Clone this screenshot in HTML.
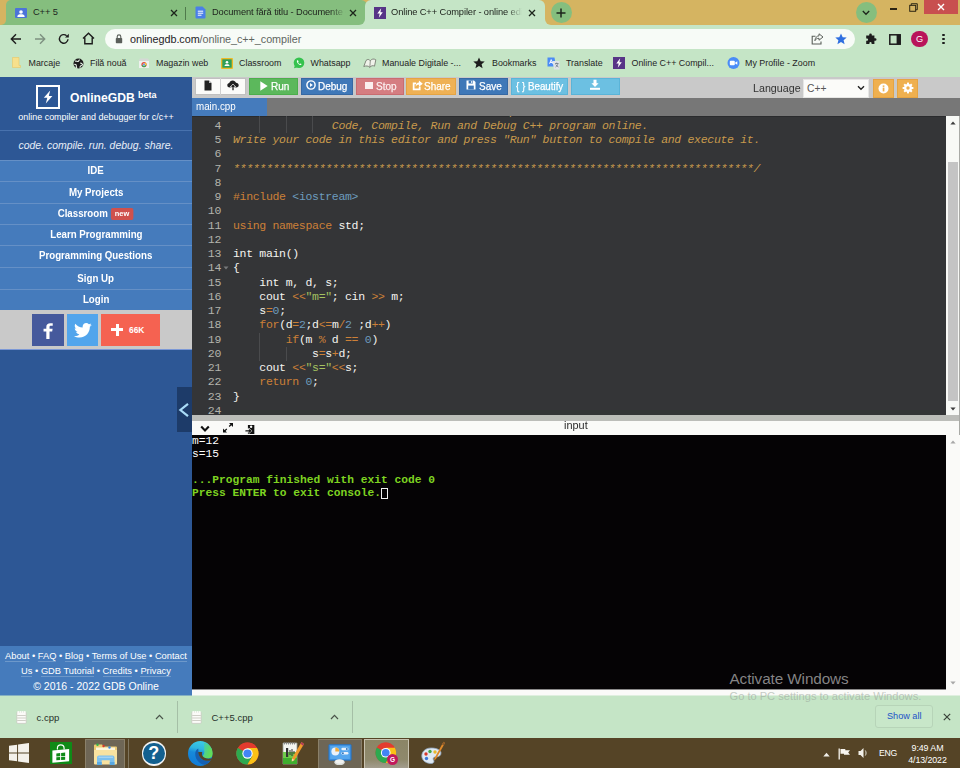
<!DOCTYPE html>
<html lang="en">
<head>
<meta charset="utf-8">
<title>Online C++ Compiler - online editor</title>
<style>
*{box-sizing:border-box;margin:0;padding:0}
html,body{width:960px;height:768px;overflow:hidden;background:#c5e5c6;font-family:"Liberation Sans",sans-serif;}
.abs{position:absolute}
#root{position:relative;width:960px;height:768px;overflow:hidden}
/* ===== browser chrome ===== */
#tabstrip{left:0;top:0;width:960px;height:26px;background:#d5b461}
#navbar{left:0;top:25px;width:960px;height:52px;background:#c5e5c6}
.tab{top:0;height:25px;font-size:9.5px;color:#1d2a1c;white-space:nowrap;overflow:hidden}
.tabtxt{position:absolute;top:7.300px;font-size:9.300px;letter-spacing:-0.100px;color:#20251f;white-space:nowrap}
.bm{top:57.500px;font-size:8.900px;color:#1f241f;white-space:nowrap}
/* ===== page ===== */
#sidebar{left:0;top:76px;width:192px;height:619px;background:#2d5795}
.menu{left:0;width:192px;height:21px;background:#457bbc;border-top:1px solid #6590c6;color:#fff;font-weight:bold;font-size:10.400px;text-align:center;line-height:20px}
#toolbar{left:192px;top:76px;width:768px;height:22px;background:#c9c9c9}
.btn{top:78px;height:17px;color:#fff;font-size:10.5px;line-height:16px;white-space:nowrap;border:1px solid rgba(0,0,0,.12)}
#filebar{left:192px;top:98px;width:768px;height:18px;background:#777}
#editor{left:192px;top:116px;width:754px;height:299px;background:#343537;overflow:hidden;font-family:"Liberation Mono",monospace;font-size:11.500px;letter-spacing:-0.3137px}
.ln{position:absolute;left:0;width:29px;text-align:right;color:#b4b4ac;height:14.25px;line-height:14.25px;white-space:pre}
.cl{position:absolute;left:41px;color:#f4f4f0;height:14.25px;line-height:14.25px;white-space:pre}
.k{color:#cc8038}.c{color:#c89a4c;font-style:italic}.s{color:#a5c261}.n{color:#6d9cbe}.o{color:#cc8038}.p{color:#c89a4c}
#console{left:192px;top:435px;width:754px;height:254px;background:#050305;font-family:"Liberation Mono",monospace;font-size:11.25px;color:#fff;overflow:hidden}
.co{position:absolute;left:0;white-space:pre;height:12.75px;line-height:12.75px}
.fl{border-bottom:1px solid rgba(255,255,255,.22)}
.mt{display:inline-block;transform:scaleX(.935);white-space:nowrap}
.bt{position:absolute;top:-1.100px;font-size:11.100px;white-space:nowrap;transform-origin:0 50%;transform:scaleX(.9);-webkit-text-stroke:0.250px currentColor}
</style>
</head>
<body>
<div id="root">

<!-- sidebar -->
<div id="sidebar" class="abs"></div>
<div class="abs" style="left:36px;top:85px;width:24px;height:24px;border:2px solid #fff;background:#2d5795"></div>
<svg class="abs" style="left:42px;top:90px" width="12" height="14" viewBox="0 0 12 14"><path d="M8.200 0.500 L1.800 7.700 H5.300 L3.800 13.500 L10.400 5.900 H6.800 Z" fill="#fff"/></svg>
<div class="abs" style="left:70px;top:90.500px;font-size:12.150px;font-weight:bold;color:#fff;white-space:nowrap">OnlineGDB</div>
<div class="abs" style="left:138px;top:89.500px;font-size:9px;font-weight:bold;color:#fff;white-space:nowrap">beta</div>
<div class="abs" style="left:0;top:112px;width:192px;text-align:center;font-size:8.970px;color:#fff;white-space:nowrap">online compiler and debugger for c/c++</div>
<div class="abs" style="left:0;top:130px;width:192px;height:1px;background:#4872ae"></div>
<div class="abs" style="left:0;top:139.500px;width:192px;text-align:center;font-size:10.450px;font-style:italic;color:#e8eef8;white-space:nowrap">code. compile. run. debug. share.</div>
<div class="abs menu" style="top:160px"><span class="mt">IDE</span></div>
<div class="abs menu" style="top:181px;height:22px;line-height:21.500px"><span class="mt">My Projects</span></div>
<div class="abs menu" style="top:203px;height:22px"><span class="mt">Classroom <span style="display:inline-block;background:#cf514d;color:#fff;font-size:8px;line-height:11px;height:12px;padding:0 4.500px;border-radius:2px;vertical-align:1px">new</span></span></div>
<div class="abs menu" style="top:224px;height:22px;line-height:20px"><span class="mt">Learn Programming</span></div>
<div class="abs menu" style="top:245px;height:22px;line-height:20px"><span class="mt">Programming Questions</span></div>
<div class="abs menu" style="top:267px;height:22px;line-height:21.500px"><span class="mt">Sign Up</span></div>
<div class="abs menu" style="top:289px;height:21px"><span class="mt">Login</span></div>
<div class="abs" style="left:0;top:310px;width:192px;height:39px;background:#c9c9c9"></div>
<div class="abs" style="left:0;top:349px;width:192px;height:1px;background:#7c98d6"></div>
<div class="abs" style="left:32px;top:314px;width:32px;height:32px;background:#45599c"></div>
<svg class="abs" style="left:39.500px;top:321.500px" width="15.500" height="18" viewBox="0 0 14 18" preserveAspectRatio="none"><path d="M8.6 17 V9.6 H11 L11.4 6.8 H8.6 V5.2 C8.6 4.3 8.9 3.8 10 3.8 H11.5 V1.3 C11.2 1.25 10.3 1.2 9.3 1.2 C7.1 1.2 5.7 2.5 5.7 4.9 V6.8 H3.2 V9.6 H5.7 V17 Z" fill="#fff"/></svg>
<div class="abs" style="left:67px;top:314px;width:31px;height:32px;background:#52a5ec"></div>
<svg class="abs" style="left:74px;top:323px" width="18" height="15" viewBox="0 0 24 20"><path d="M23.6 2.4c-.9.4-1.8.7-2.8.8 1-.6 1.800-1.600 2.100-2.700-.9.600-2 1-3.100 1.200C18.900.700 17.700.100 16.300.100c-2.700 0-4.800 2.200-4.800 4.800 0 .4 0 .8.100 1.100C7.600 5.800 4.100 3.900 1.700 1 1.300 1.700 1 2.600 1 3.500c0 1.700.900 3.200 2.200 4-.8 0-1.500-.2-2.200-.6v.100c0 2.300 1.700 4.300 3.900 4.700-.4.100-.8.200-1.300.2-.3 0-.6 0-.9-.1.600 1.900 2.400 3.300 4.500 3.400-1.700 1.300-3.700 2.100-6 2.100-.4 0-.8 0-1.200-.1 2.100 1.400 4.700 2.200 7.400 2.200 8.900 0 13.700-7.400 13.700-13.700v-.6c.9-.7 1.700-1.500 2.400-2.500z" fill="#fff"/></svg>
<div class="abs" style="left:101px;top:314px;width:59px;height:32px;background:#f56251"></div>
<div class="abs" style="left:111px;top:328px;width:12px;height:3px;background:#fff"></div>
<div class="abs" style="left:115.500px;top:323.500px;width:3px;height:12px;background:#fff"></div>
<div class="abs" style="left:129px;top:325px;font-size:8.400px;font-weight:bold;color:#fff">66K</div>
<div class="abs" style="left:177px;top:387px;width:15px;height:45px;background:#1d3b69"></div>
<svg class="abs" style="left:178px;top:401.500px" width="12" height="16" viewBox="0 0 12 16"><path d="M10 1.800 L2.400 8 L10 14.200" fill="none" stroke="#aadcf8" stroke-width="2.200"/></svg>
<div class="abs" style="left:0;top:646px;width:192px;height:50px;background:#457bbc"></div>
<div class="abs" style="left:0;top:651px;width:192px;text-align:center;font-size:9.300px;color:#fff;white-space:nowrap"><span class="fl">About</span> • <span class="fl">FAQ</span> • <span class="fl">Blog</span> • <span class="fl">Terms of Use</span> • <span class="fl">Contact</span></div>
<div class="abs" style="left:0;top:666px;width:192px;text-align:center;font-size:9.300px;color:#fff;white-space:nowrap"><span class="fl">Us</span> • <span class="fl">GDB Tutorial</span> • <span class="fl">Credits</span> • <span class="fl">Privacy</span></div>
<div class="abs" style="left:0;top:679.500px;width:192px;text-align:center;font-size:10.500px;color:#fff;white-space:nowrap">© 2016 - 2022 GDB Online</div>
<!-- toolbar -->
<div id="toolbar" class="abs"></div>
<div class="abs" style="left:195px;top:78px;width:51px;height:17px;background:#fbfbf9;border:1px solid #c0c0c0"></div>
<div class="abs" style="left:220px;top:78px;width:1px;height:17px;background:#d0d0d0"></div>
<svg class="abs" style="left:204px;top:80px" width="8" height="11" viewBox="0 0 8 11"><path d="M0.5 0.5 H5 L7.5 3 V10.5 H0.5 Z" fill="#222"/><path d="M5 0.5 V3 H7.5 Z" fill="#bbb"/></svg>
<svg class="abs" style="left:227px;top:80px" width="12" height="11" viewBox="0 0 12 11"><path d="M3 7.5 C1.3 7.5 0.3 6.500 0.3 5.200 C0.3 4 1.200 3.200 2.300 3.100 C2.600 1.500 4 0.400 5.700 0.400 C7.300 0.400 8.600 1.400 9 2.800 C10.600 2.900 11.700 3.900 11.700 5.300 C11.700 6.600 10.700 7.500 9.300 7.500 Z" fill="#222"/><path d="M6 4 L8.800 7 H7 V10.600 H5 V7 H3.200 Z" fill="#222" stroke="#fbfbf9" stroke-width="0.700"/></svg>
<div class="abs btn" style="left:249px;width:49px;background:#5cb85c;border-color:#4cae4c"><svg style="position:absolute;left:9.500px;top:1.700px" width="8" height="10" viewBox="0 0 8 10"><path d="M0.3 0.3 L7.700 5 L0.3 9.700 Z" fill="#fff"/></svg><span class="bt" style="left:21px">Run</span></div>
<div class="abs btn" style="left:301px;width:52px;background:#3f78b8;border-color:#3668a3"><svg style="position:absolute;left:4px;top:1.300px" width="10" height="10" viewBox="0 0 9 9"><circle cx="4.500" cy="4.500" r="3.700" fill="none" stroke="#fff" stroke-width="1.300"/><path d="M3.600 2.800 L6.200 4.500 L3.600 6.200 Z" fill="#fff"/></svg><span class="bt" style="left:16px">Debug</span></div>
<div class="abs btn" style="left:355.500px;width:48.700px;background:#d57d81;border-color:#c96c70"><div style="position:absolute;left:8.500px;top:2.500px;width:7.500px;height:7.500px;background:#fbeeee"></div><span class="bt" style="left:19px;color:#fbeeee">Stop</span></div>
<div class="abs btn" style="left:406px;width:50px;background:#efb155;border-color:#e5a443"><svg style="position:absolute;left:4.500px;top:0.800px" width="11" height="11" viewBox="0 0 10 10"><path d="M7 6 V8.500 H1.500 V3 H3.800" fill="none" stroke="#fff" stroke-width="1.600"/><path d="M6.300 0.500 L9.800 3.300 L6.300 6.100 V4.300 C4.800 4.300 3.900 4.800 3.300 6.200 C3.300 3.800 4.500 2.400 6.300 2.300 Z" fill="#fff"/></svg><span class="bt" style="left:17px">Share</span></div>
<div class="abs btn" style="left:459px;width:49px;background:#3f78b8;border-color:#3668a3"><svg style="position:absolute;left:6px;top:0.700px" width="10" height="10" viewBox="0 0 10 10"><path d="M0.500 0.500 H8 L9.500 2 V9.500 H0.500 Z" fill="#fff"/><rect x="2.600" y="0.500" width="4.300" height="3" fill="#3f78b8"/><rect x="5.200" y="1" width="1.100" height="2" fill="#fff"/><rect x="2.200" y="5.600" width="5.600" height="3.900" fill="#3f78b8"/></svg><span class="bt" style="left:18.500px">Save</span></div>
<div class="abs btn" style="left:511px;width:57.300px;background:#6cc0e2;border-color:#5ab4d8"><span class="bt" style="left:4px;transform:scaleX(.88)">{ } Beautify</span></div>
<div class="abs btn" style="left:571px;width:48.800px;background:#6cc0e2;border-color:#5ab4d8"><svg style="position:absolute;left:17px;top:0px" width="12" height="12" viewBox="0 0 12 12"><path d="M4.500 0.800 H7.500 V4.300 H9.600 L6 8 L2.400 4.300 H4.500 Z" fill="#fff"/><rect x="1" y="8.800" width="10" height="2" fill="#fff"/></svg></div>
<div class="abs" style="left:753px;top:81.500px;font-size:11.500px;color:#333;white-space:nowrap;transform-origin:0 0;transform:scaleX(.93)">Language</div>
<div class="abs" style="left:803px;top:79px;width:66px;height:18.500px;background:#fbfbf9;border:1px solid #e6e6e4"></div>
<div class="abs" style="left:807px;top:82.500px;font-size:10.300px;color:#555;white-space:nowrap">C++</div>
<svg class="abs" style="left:857px;top:85px" width="8" height="6" viewBox="0 0 8 6"><path d="M1 1.200 L4 4.200 L7 1.200" fill="none" stroke="#222" stroke-width="1.400"/></svg>
<div class="abs" style="left:873px;top:79px;width:21px;height:18.500px;background:#efb04f;border:1px solid #e5a443"></div>
<svg class="abs" style="left:878px;top:82.500px" width="11" height="11" viewBox="0 0 11 11"><circle cx="5.500" cy="5.500" r="5" fill="#fff"/><rect x="4.700" y="4.600" width="1.700" height="3.800" fill="#efb04f"/><rect x="4.700" y="2.400" width="1.700" height="1.500" fill="#efb04f"/></svg>
<div class="abs" style="left:897px;top:79px;width:21px;height:18.500px;background:#efb04f;border:1px solid #e5a443"></div>
<svg class="abs" style="left:901.500px;top:82.300px" width="12" height="12" viewBox="0 0 12 12"><g fill="#fff"><circle cx="6" cy="6" r="3.900"/><rect x="5" y="0.600" width="2" height="10.800"/><rect x="0.600" y="5" width="10.800" height="2"/><rect x="5" y="0.600" width="2" height="10.800" transform="rotate(45 6 6)"/><rect x="5" y="0.600" width="2" height="10.800" transform="rotate(-45 6 6)"/></g><circle cx="6" cy="6" r="1.700" fill="#efb04f"/></svg>
<!-- filebar -->
<div id="filebar" class="abs"></div>
<div class="abs" style="left:192px;top:98px;width:74.500px;height:18px;background:#457bbc"></div>
<div class="abs" style="left:196px;top:100.800px;font-size:10.300px;color:#fff;white-space:nowrap;transform-origin:0 0;transform:scaleX(.95)">main.cpp</div>
<div id="editor" class="abs">
<div class="abs" style="left:0;top:0;width:754px;height:1px;background:#2a2b2d"></div>
<div class="abs" style="left:67.35px;top:2.88px;width:1px;height:14.25px;background:#4a4b4d"></div>
<div class="abs" style="left:67.35px;top:-11.38px;width:1px;height:14.25px;background:#4a4b4d"></div>
<div class="abs" style="left:93.70px;top:2.88px;width:1px;height:14.25px;background:#4a4b4d"></div>
<div class="abs" style="left:93.70px;top:-11.38px;width:1px;height:14.25px;background:#4a4b4d"></div>
<div class="abs" style="left:120.05px;top:2.88px;width:1px;height:14.25px;background:#4a4b4d"></div>
<div class="abs" style="left:120.05px;top:-11.38px;width:1px;height:14.25px;background:#4a4b4d"></div>
<div class="abs" style="left:67.35px;top:216.62px;width:1px;height:14.25px;background:#4a4b4d"></div>
<div class="abs" style="left:67.35px;top:230.88px;width:1px;height:14.25px;background:#4a4b4d"></div>
<div class="abs" style="left:93.70px;top:230.88px;width:1px;height:14.25px;background:#4a4b4d"></div>
<div class="ln" style="top:-11.38px">3</div>
<div class="cl" style="top:-11.38px"><span class="c">                            Online C++ Compiler.</span></div>
<div class="ln" style="top:2.88px">4</div>
<div class="cl" style="top:2.88px"><span class="c">               Code, Compile, Run and Debug C++ program online.</span></div>
<div class="ln" style="top:17.12px">5</div>
<div class="cl" style="top:17.12px"><span class="c">Write your code in this editor and press "Run" button to compile and execute it.</span></div>
<div class="ln" style="top:31.38px">6</div>
<div class="ln" style="top:45.62px">7</div>
<div class="cl" style="top:45.62px"><span class="c">*******************************************************************************/</span></div>
<div class="ln" style="top:59.88px">8</div>
<div class="ln" style="top:74.12px">9</div>
<div class="cl" style="top:74.12px"><span class="k">#include </span><span class="n">&lt;iostream&gt;</span></div>
<div class="ln" style="top:88.38px">10</div>
<div class="ln" style="top:102.62px">11</div>
<div class="cl" style="top:102.62px"><span class="k">using namespace</span> std;</div>
<div class="ln" style="top:116.88px">12</div>
<div class="ln" style="top:131.12px">13</div>
<div class="cl" style="top:131.12px">int main()</div>
<div class="ln" style="top:145.38px">14</div>
<div class="cl" style="top:145.38px">{</div>
<div class="ln" style="top:159.62px">15</div>
<div class="cl" style="top:159.62px">    int m, d, s;</div>
<div class="ln" style="top:173.88px">16</div>
<div class="cl" style="top:173.88px">    cout <span class="o">&lt;&lt;</span><span class="s">"m="</span>; cin <span class="o">&gt;&gt;</span> m;</div>
<div class="ln" style="top:188.12px">17</div>
<div class="cl" style="top:188.12px">    s<span class="o">=</span><span class="n">0</span>;</div>
<div class="ln" style="top:202.38px">18</div>
<div class="cl" style="top:202.38px">    <span class="k">for</span>(d<span class="o">=</span><span class="n">2</span>;d<span class="o">&lt;=</span>m<span class="o">/</span><span class="n">2</span> ;d<span class="o">++</span>)</div>
<div class="ln" style="top:216.62px">19</div>
<div class="cl" style="top:216.62px">        <span class="k">if</span>(m <span class="o">%</span> d <span class="o">==</span> <span class="n">0</span>)</div>
<div class="ln" style="top:230.88px">20</div>
<div class="cl" style="top:230.88px">            s<span class="o">=</span>s<span class="o">+</span>d;</div>
<div class="ln" style="top:245.12px">21</div>
<div class="cl" style="top:245.12px">    cout <span class="o">&lt;&lt;</span><span class="s">"s="</span><span class="o">&lt;&lt;</span>s;</div>
<div class="ln" style="top:259.38px">22</div>
<div class="cl" style="top:259.38px">    <span class="k">return</span> <span class="n">0</span>;</div>
<div class="ln" style="top:273.62px">23</div>
<div class="cl" style="top:273.62px">}</div>
<div class="ln" style="top:287.88px">24</div>
<svg class="abs" style="left:31px;top:150.38px" width="6" height="4" viewBox="0 0 6 4"><path d="M0.500 0.500 H5.500 L3 3.500 Z" fill="#77787a"/></svg>
</div>
<div class="abs" style="left:946px;top:116px;width:14px;height:299px;background:#f8f9f6"></div>
<div class="abs" style="left:948px;top:162px;width:10px;height:238.500px;background:#c4c4c4"></div>
<svg class="abs" style="left:950px;top:121px" width="6" height="4" viewBox="0 0 8 5"><path d="M0.500 4.500 L4 0.500 L7.500 4.500 Z" fill="#3c3c3c"/></svg>
<svg class="abs" style="left:950px;top:407px" width="6" height="4" viewBox="0 0 8 5"><path d="M0.500 0.500 L4 4.500 L7.500 0.500 Z" fill="#3c3c3c"/></svg>
<!-- splitter + console -->
<div class="abs" style="left:192px;top:415px;width:768px;height:6px;background:#bcbdb9"></div>
<div class="abs" style="left:192px;top:421px;width:768px;height:14px;background:#fafaf8"></div>
<svg class="abs" style="left:199.500px;top:424.500px" width="10" height="8" viewBox="0 0 10 8"><path d="M1.200 1.500 L5 5.500 L8.800 1.500" fill="none" stroke="#111" stroke-width="2.100"/></svg>
<svg class="abs" style="left:221.500px;top:421.800px" width="12" height="12" viewBox="0 0 12 11"><path d="M7.200 4 L9.600 1.600 M2.400 8.800 L4.800 6.400" stroke="#111" stroke-width="1.300" fill="none"/><path d="M7 0.600 H11 V4.600 Z M1 6 V10 H5 Z" fill="#111"/></svg>
<svg class="abs" style="left:243.500px;top:423.500px" width="11.500" height="11" viewBox="0 0 12 12"><path d="M4 1 H11 V11 H4 V8 H6 V5 H4 Z" fill="#111"/><path d="M1 6.500 H5 V4.500 L8.500 7.500 L5 10.500 V8.500 H1 Z" fill="#111" stroke="#fafaf8" stroke-width="0.600"/><circle cx="7.500" cy="3" r="1.300" fill="#fafaf8"/></svg>
<div class="abs" style="left:563.500px;top:418.800px;font-size:10.600px;color:#2a2a2a;white-space:nowrap;transform-origin:0 0;transform:scaleX(1.03)">input</div>
<div id="console" class="abs">
<div class="co" style="top:0.300px">m=12</div>
<div class="co" style="top:13.050px">s=15</div>
<div class="co" style="top:39.050px;color:#7ed321;font-weight:bold">...Program finished with exit code 0</div>
<div class="co" style="top:51.800px;color:#7ed321;font-weight:bold">Press ENTER to exit console.</div>
<div class="abs" style="left:189px;top:52.500px;width:6.500px;height:11px;border:1px solid #f0f0f0"></div>
</div>
<div class="abs" style="left:946px;top:435px;width:14px;height:255px;background:#fafaf8"></div><div class="abs" style="left:192px;top:689px;width:754px;height:1px;background:#8a8989"></div>
<svg class="abs" style="left:950px;top:440px" width="6" height="4" viewBox="0 0 8 5"><path d="M0.500 4.500 L4 0.500 L7.500 4.500 Z" fill="#a8a8a8"/></svg>
<svg class="abs" style="left:950px;top:681px" width="6" height="4" viewBox="0 0 8 5"><path d="M0.500 0.500 L4 4.500 L7.500 0.500 Z" fill="#a8a8a8"/></svg>
<div class="abs" style="left:192px;top:690px;width:768px;height:6px;background:#fafaf8"></div>
<div class="abs" style="left:959px;top:116px;width:1px;height:319px;background:#a9aaa6"></div>
<!-- ===== browser chrome ===== -->
<div id="tabstrip" class="abs"></div>
<div id="navbar" class="abs"></div>
<!-- inactive tabs (green group) -->
<div class="abs" style="left:6px;top:0;width:361px;height:25px;background:#85be7e;border-radius:5px 6px 0 0"></div>
<div class="abs" style="left:0;top:20px;width:6px;height:5px;background:#85be7e"></div>
<div class="abs" style="left:-5px;top:13px;width:11px;height:12px;background:#d5b461;border-radius:0 0 5px 0"></div>
<!-- active tab -->
<div class="abs" style="left:365px;top:0;width:179.500px;height:26px;background:#c5e5c6;border-radius:6px 6px 0 0"></div>
<div class="abs" style="left:359px;top:19px;width:6px;height:6px;background:#c5e5c6"></div>
<div class="abs" style="left:353px;top:13px;width:12px;height:12px;background:#85be7e;border-radius:0 0 6px 0"></div>
<div class="abs" style="left:544.500px;top:19px;width:6px;height:6px;background:#c5e5c6"></div>
<div class="abs" style="left:544.500px;top:13px;width:12px;height:12px;background:#d5b461;border-radius:0 0 0 6px"></div>
<div class="abs" style="left:185px;top:7px;width:1px;height:13px;background:#4f7a4b"></div>
<!-- tab 1 -->
<div class="abs" style="left:15px;top:7.500px;width:12px;height:10.500px;background:#4c74d9;border-radius:1px"></div>
<svg class="abs" style="left:15px;top:7.500px" width="12" height="11" viewBox="0 0 12 11"><circle cx="6" cy="4" r="1.800" fill="#fff"/><path d="M2.300 9 C2.300 6.800 4 6.300 6 6.300 C8 6.300 9.700 6.800 9.700 9 Z" fill="#fff"/></svg>
<div class="tabtxt" style="left:33px">C++ 5</div>
<svg class="abs" style="left:170px;top:9px" width="8" height="8" viewBox="0 0 8 8"><path d="M1 1 L7 7 M7 1 L1 7" stroke="#1c241b" stroke-width="1.300"/></svg>
<!-- tab 2 -->
<svg class="abs" style="left:195px;top:6px" width="11" height="13" viewBox="0 0 11 13"><path d="M1.500 0.500 H7.500 L10.500 3.500 V11.500 Q10.500 12.500 9.500 12.500 H1.500 Q0.500 12.500 0.500 11.500 V1.500 Q0.500 0.500 1.500 0.500 Z" fill="#4a7fe8"/><path d="M2.800 5.200 H8.200 M2.800 7.200 H8.200 M2.800 9.200 H6.500" stroke="#fff" stroke-width="1"/></svg>
<div class="tabtxt" style="left:212px;width:136px;overflow:hidden;-webkit-mask-image:linear-gradient(90deg,#000 118px,transparent 134px);mask-image:linear-gradient(90deg,#000 118px,transparent 134px)">Document fără titlu - Documente Google</div>
<svg class="abs" style="left:349px;top:9px" width="8" height="8" viewBox="0 0 8 8"><path d="M1 1 L7 7 M7 1 L1 7" stroke="#1c241b" stroke-width="1.300"/></svg>
<!-- tab 3 -->
<div class="abs" style="left:373.500px;top:7px;width:12px;height:12px;background:#573487"></div>
<svg class="abs" style="left:375.500px;top:8px" width="8" height="10" viewBox="0 0 8 10"><path d="M5.200 0.300 L1.300 5.400 H3.700 L2.800 9.700 L6.800 4.300 H4.400 Z" fill="#fff"/></svg>
<div class="tabtxt" style="left:391px;width:132px;overflow:hidden;-webkit-mask-image:linear-gradient(90deg,#000 116px,transparent 131px);mask-image:linear-gradient(90deg,#000 116px,transparent 131px)">Online C++ Compiler - online editor</div>
<svg class="abs" style="left:528px;top:9px" width="8" height="8" viewBox="0 0 8 8"><path d="M1 1 L7 7 M7 1 L1 7" stroke="#1c241b" stroke-width="1.300"/></svg>
<!-- new tab -->
<div class="abs" style="left:550.500px;top:2px;width:21px;height:21px;border-radius:50%;background:#85be7e"></div>
<svg class="abs" style="left:556px;top:7.500px" width="10" height="10" viewBox="0 0 10 10"><path d="M5 0.500 V9.500 M0.500 5 H9.500" stroke="#1c241b" stroke-width="1.500"/></svg>
<!-- tab search -->
<div class="abs" style="left:855.500px;top:2px;width:21px;height:21px;border-radius:50%;background:#85be7e"></div>
<svg class="abs" style="left:862px;top:9.500px" width="8" height="6" viewBox="0 0 8 6"><path d="M0.800 1 L4 4.300 L7.200 1" fill="none" stroke="#1c241b" stroke-width="1.300"/></svg>
<!-- window controls -->
<div class="abs" style="left:890px;top:8px;width:7px;height:2px;background:#2b2412"></div>
<svg class="abs" style="left:909px;top:2.500px" width="9" height="9" viewBox="0 0 10 10"><path d="M2.500 2.500 V0.800 H9.200 V7.500 H7.500" fill="none" stroke="#2b2412" stroke-width="1.100"/><rect x="0.800" y="2.600" width="6.600" height="6.600" fill="none" stroke="#2b2412" stroke-width="1.100"/></svg>
<div class="abs" style="left:924px;top:0;width:34px;height:14px;background:#c84f4f"></div>
<svg class="abs" style="left:937px;top:3px" width="8" height="8" viewBox="0 0 8 8"><path d="M1 1 L7 7 M7 1 L1 7" stroke="#fff" stroke-width="1.400"/></svg>
<!-- nav buttons -->
<svg class="abs" style="left:10px;top:33px" width="12" height="12" viewBox="0 0 12 12"><path d="M11 6 H1.800 M6 1.300 L1.300 6 L6 10.700" fill="none" stroke="#1c1c1c" stroke-width="1.400"/></svg>
<svg class="abs" style="left:34px;top:33px" width="12" height="12" viewBox="0 0 12 12"><path d="M1 6 H10.200 M6 1.300 L10.700 6 L6 10.700" fill="none" stroke="#7d9080" stroke-width="1.400"/></svg>
<svg class="abs" style="left:58px;top:33px" width="12" height="12" viewBox="0 0 12 12"><path d="M10 6.300 A4.300 4.300 0 1 1 8.600 2.700" fill="none" stroke="#1c1c1c" stroke-width="1.400"/><path d="M10.800 0.800 V4.600 H7 Z" fill="#1c1c1c"/></svg>
<svg class="abs" style="left:82px;top:32px" width="13" height="13" viewBox="0 0 13 13"><path d="M1 6.500 L6.500 1.300 L12 6.500 M2.800 5.600 V11.800 H10.200 V5.600" fill="none" stroke="#1c1c1c" stroke-width="1.400"/></svg>
<!-- omnibox -->
<div class="abs" style="left:105px;top:28.500px;width:750px;height:20.500px;border-radius:10.250px;background:#f7fbf7"></div>
<svg class="abs" style="left:114.500px;top:34px" width="8" height="10" viewBox="0 0 8 10"><rect x="0.800" y="4" width="6.400" height="5.200" rx="0.700" fill="#5a5f5a"/><path d="M2.200 4 V2.700 A1.800 1.800 0 0 1 5.800 2.700 V4" fill="none" stroke="#5a5f5a" stroke-width="1.100"/></svg>
<div class="abs" style="left:130px;top:32.500px;font-size:10.800px;color:#1f231f;white-space:nowrap;letter-spacing:-0.050px">onlinegdb.com<span style="color:#5f665f">/online_c++_compiler</span></div>
<svg class="abs" style="left:811px;top:33px" width="13" height="12" viewBox="0 0 13 12"><path d="M4.500 3.200 H1.200 V11 H10 V8.500" fill="none" stroke="#5a5f5a" stroke-width="1.100"/><path d="M8 0.800 L12 4 L8 7.200 V5.300 C6 5.300 4.700 6 3.900 7.700 C4.100 4.700 5.700 3 8 2.800 Z" fill="none" stroke="#5a5f5a" stroke-width="1"/></svg>
<svg class="abs" style="left:835px;top:33px" width="12" height="12" viewBox="0 0 12 12"><path d="M6 0.500 L7.700 4.300 L11.700 4.600 L8.600 7.300 L9.600 11.300 L6 9.100 L2.400 11.300 L3.400 7.300 L0.300 4.600 L4.300 4.300 Z" fill="#2f6fe0"/></svg>
<!-- toolbar right icons -->
<svg class="abs" style="left:865px;top:33px" width="12" height="12" viewBox="0 0 12 12"><path d="M4.200 1.800 A1.300 1.300 0 0 1 6.800 1.800 V2.600 H9.400 V5.200 H10.200 A1.300 1.300 0 0 1 10.200 7.800 H9.400 V11 H6.600 V10.200 A1.100 1.100 0 0 0 4.400 10.200 V11 H1.200 V7.800 H2 A1.100 1.100 0 0 0 2 5.600 H1.200 V2.600 H4.200 Z" fill="#1c1c1c"/></svg>
<svg class="abs" style="left:889px;top:33.500px" width="12" height="11" viewBox="0 0 12 11"><rect x="0.800" y="0.800" width="10.400" height="9.400" fill="none" stroke="#1c1c1c" stroke-width="1.500"/><rect x="7.600" y="0.800" width="3.600" height="9.400" fill="#1c1c1c"/></svg>
<div class="abs" style="left:911.300px;top:30.700px;width:16.700px;height:16.700px;border-radius:50%;background:#b9145a;color:#fff;font-size:9.200px;text-align:center;line-height:16.700px">G</div>
<div class="abs" style="left:942.300px;top:33.800px;width:2.400px;height:2.400px;background:#1c1c1c;border-radius:50%;box-shadow:0 4px 0 #1c1c1c,0 8px 0 #1c1c1c"></div>
<!-- bookmarks bar -->
<svg class="abs" style="left:12px;top:57px" width="9" height="11" viewBox="0 0 9 11"><path d="M0.500 0.500 H7 V8.500 H8.500 V10.500 H0.500 Z" fill="#f7e08c" stroke="#e9c764" stroke-width="0.600"/></svg>
<div class="abs bm" style="left:28.500px">Marcaje</div>
<svg class="abs" style="left:72.500px;top:57.500px" width="11" height="11" viewBox="0 0 11 11"><circle cx="5.500" cy="5.500" r="5" fill="#1d1d1d"/><path d="M2 3.300 C3.300 2.600 4.200 3.800 5.200 3.400 C6.200 3 5.600 1.900 6.800 1.700 M1.300 6.500 C2.600 6 3.500 7 3.300 8.200 C3.200 9 3.800 9.300 3.700 10 M7.200 5.200 C8.300 5 9.200 5.800 9.700 6.700 C9 7.700 8.300 7.200 7.600 7.800 C7 8.300 7.400 9 6.700 9.600" fill="none" stroke="#e9f3e9" stroke-width="1.100"/></svg>
<div class="abs bm" style="left:90px">Filă nouă</div>
<svg class="abs" style="left:138px;top:57px" width="12" height="12" viewBox="0 0 12 12"><path d="M0.500 4 L2 1.500 H10 L11.500 4 Z" fill="#d5d9d5"/><path d="M1 4 H11 V11 H1 Z" fill="#eef1ee"/><circle cx="6" cy="7.600" r="2.600" fill="#e24a3b"/><path d="M3.600 8.600 A2.600 2.600 0 0 0 8.400 8.600 L6 7.600 Z" fill="#3aa757"/><path d="M6 7.600 L8.400 8.600 A2.600 2.600 0 0 0 7.300 5.400 Z" fill="#f7c52d"/><circle cx="6" cy="7.600" r="1.100" fill="#4a86e8" stroke="#fff" stroke-width="0.400"/></svg>
<div class="abs bm" style="left:156px">Magazin web</div>
<svg class="abs" style="left:221px;top:57.500px" width="12" height="11" viewBox="0 0 12 11"><rect x="0" y="0" width="12" height="11" rx="1" fill="#eeb927"/><rect x="1.300" y="1.300" width="9.400" height="8.400" fill="#2f9e5a"/><circle cx="6" cy="4.300" r="1.300" fill="#fff"/><path d="M3.500 8 C3.500 6.600 4.700 6.200 6 6.200 C7.300 6.200 8.500 6.600 8.500 8 Z" fill="#fff"/></svg>
<div class="abs bm" style="left:239px">Classroom</div>
<svg class="abs" style="left:292.500px;top:57px" width="12" height="12" viewBox="0 0 12 12"><circle cx="6" cy="5.800" r="5.300" fill="#35c24e"/><path d="M1 11.300 L1.900 8.300 L4 10.400 Z" fill="#35c24e"/><path d="M4.300 3.300 C3.600 3.700 3.700 4.900 4.700 6.200 C5.700 7.500 7 8.300 7.900 8 C8.400 7.800 8.600 7.300 8.500 7 L7.300 6.400 L6.800 7 C6.200 6.800 5.400 6 5.100 5.400 L5.600 4.800 L5.100 3.500 C4.900 3.200 4.500 3.200 4.300 3.300 Z" fill="#fff"/></svg>
<div class="abs bm" style="left:310.500px">Whatsapp</div>
<svg class="abs" style="left:363px;top:57px" width="14" height="12" viewBox="0 0 14 12"><path d="M0.800 9.500 L3 3.500 C4.500 2 6.200 2.200 7.300 3.800 C8.800 1.800 10.800 1.500 12.800 2.800 L11.500 9.200 C10 8.200 8.300 8.600 6.800 10.300 C5.300 8.800 3 8.600 0.800 9.500 Z" fill="#f0f2ea" stroke="#6a6f64" stroke-width="0.800"/><path d="M7.300 3.800 L6.800 10.300" stroke="#6a6f64" stroke-width="0.700"/></svg>
<div class="abs bm" style="left:382px">Manuale Digitale -...</div>
<svg class="abs" style="left:473px;top:57px" width="12" height="12" viewBox="0 0 12 12"><path d="M6 0.500 L7.700 4.300 L11.700 4.600 L8.600 7.300 L9.600 11.300 L6 9.100 L2.400 11.300 L3.400 7.300 L0.300 4.600 L4.300 4.300 Z" fill="#1d1d1d"/></svg>
<div class="abs bm" style="left:492px">Bookmarks</div>
<svg class="abs" style="left:547px;top:56.500px" width="13" height="13" viewBox="0 0 13 13"><path d="M0.500 0.500 H7.500 L9 9.500 H0.500 Z" fill="#4b8bf5"/><path d="M5.500 4 H12.500 V12.500 H7 Z" fill="#dfe3e8"/><path d="M2.500 6.800 L4.200 2.600 L5.900 6.800 M3.100 5.500 H5.300" fill="none" stroke="#fff" stroke-width="0.900"/><path d="M8 6.500 H11.500 M9.700 5.600 V6.500 M8.600 10 C10 9.300 10.700 8 10.900 6.600 M8.700 7.500 C9.300 8.600 10.300 9.500 11.500 10" fill="none" stroke="#5f6b7a" stroke-width="0.700"/></svg>
<div class="abs bm" style="left:566px">Translate</div>
<div class="abs" style="left:613px;top:57px;width:12px;height:12px;background:#573487"></div>
<svg class="abs" style="left:615px;top:58px" width="8" height="10" viewBox="0 0 8 10"><path d="M5.200 0.300 L1.300 5.400 H3.700 L2.800 9.700 L6.800 4.300 H4.400 Z" fill="#fff"/></svg>
<div class="abs bm" style="left:631.500px">Online C++ Compil...</div>
<svg class="abs" style="left:727px;top:57px" width="13" height="12" viewBox="0 0 13 12"><circle cx="6.500" cy="6" r="6" fill="#4a8cf7"/><rect x="2.800" y="3.800" width="5" height="4.400" rx="1" fill="#fff"/><path d="M8.200 5.600 L10.300 4.200 V7.800 L8.200 6.400 Z" fill="#fff"/></svg>
<div class="abs bm" style="left:745px">My Profile - Zoom</div>

<!-- ===== download shelf ===== -->
<div class="abs" style="left:0;top:696px;width:960px;height:42px;background:#c5e5c6"></div>
<svg class="abs" style="left:15.500px;top:709.500px" width="11" height="14" viewBox="0 0 11 14"><path d="M0.800 2.500 H10.200 V12.600 Q10.200 13.400 9.400 13.400 H1.600 Q0.800 13.400 0.800 12.600 Z" fill="#fbfbf8" stroke="#c4c4bb" stroke-width="0.700"/><circle cx="2.300" cy="2.200" r="1.100" fill="#fbfbf8"/><circle cx="4.450" cy="2.200" r="1.100" fill="#fbfbf8"/><circle cx="6.600" cy="2.200" r="1.100" fill="#fbfbf8"/><circle cx="8.750" cy="2.200" r="1.100" fill="#fbfbf8"/><path d="M1.200 5.500 H9.800 M1.200 8 H9.800 M1.200 10.500 H9.800" stroke="#c9c9c1" stroke-width="0.900"/></svg>
<div class="abs" style="left:36.500px;top:711.500px;font-size:9.500px;color:#25302a;white-space:nowrap">c.cpp</div>
<svg class="abs" style="left:155px;top:714px" width="9" height="6" viewBox="0 0 9 6"><path d="M1 5 L4.500 1.300 L8 5" fill="none" stroke="#4a544a" stroke-width="1.200"/></svg>
<div class="abs" style="left:177px;top:701px;width:1px;height:32px;background:#a5bfa6"></div>
<svg class="abs" style="left:190.500px;top:709.500px" width="11" height="14" viewBox="0 0 11 14"><path d="M0.800 2.500 H10.200 V12.600 Q10.200 13.400 9.400 13.400 H1.600 Q0.800 13.400 0.800 12.600 Z" fill="#fbfbf8" stroke="#c4c4bb" stroke-width="0.700"/><circle cx="2.300" cy="2.200" r="1.100" fill="#fbfbf8"/><circle cx="4.450" cy="2.200" r="1.100" fill="#fbfbf8"/><circle cx="6.600" cy="2.200" r="1.100" fill="#fbfbf8"/><circle cx="8.750" cy="2.200" r="1.100" fill="#fbfbf8"/><path d="M1.200 5.500 H9.800 M1.200 8 H9.800 M1.200 10.500 H9.800" stroke="#c9c9c1" stroke-width="0.900"/></svg>
<div class="abs" style="left:211.500px;top:711.500px;font-size:9.500px;color:#25302a;white-space:nowrap">C++5.cpp</div>
<svg class="abs" style="left:330px;top:714px" width="9" height="6" viewBox="0 0 9 6"><path d="M1 5 L4.500 1.300 L8 5" fill="none" stroke="#4a544a" stroke-width="1.200"/></svg>
<div class="abs" style="left:352px;top:701px;width:1px;height:32px;background:#a5bfa6"></div>
<div class="abs" style="left:875px;top:705px;width:58px;height:22.500px;border:1px solid #b7d4b8;border-radius:3px;background:#c8e7c9"></div>
<div class="abs" style="left:887px;top:711px;font-size:9.150px;color:#1d53c8;white-space:nowrap">Show all</div>
<svg class="abs" style="left:942.500px;top:712.500px" width="8" height="8" viewBox="0 0 8 8"><path d="M0.800 0.800 L7.200 7.200 M7.200 0.800 L0.800 7.200" stroke="#3a443a" stroke-width="1.200"/></svg>
<div class="abs" style="left:0;top:695px;width:192px;height:1px;background:#85b0c1"></div><div class="abs" style="left:192px;top:695px;width:768px;height:1px;background:#dfefdf"></div>
<!-- watermark -->
<div class="abs" style="left:729.500px;top:669.500px;font-size:15.300px;color:rgba(185,185,185,.72);white-space:nowrap;letter-spacing:-0.100px">Activate Windows</div>
<div class="abs" style="left:729.500px;top:689.500px;font-size:11.100px;color:rgba(150,160,150,.55);white-space:nowrap;letter-spacing:0">Go to PC settings to activate Windows.</div>
<!-- ===== taskbar ===== -->
<div class="abs" style="left:0;top:738px;width:960px;height:30px;background:#554426"></div>
<!-- start -->
<svg class="abs" style="left:9px;top:742.500px" width="20" height="20" viewBox="0 0 21 21"><path d="M0 3 L8.500 1.800 V10 H0 Z M9.500 1.650 L21 0 V10 H9.500 Z M0 11 H8.500 V19.200 L0 18 Z M9.500 11 H21 V21 L9.500 19.350 Z" fill="#f4f1ea"/></svg>
<!-- store -->
<div class="abs" style="left:49.500px;top:742px;width:22.500px;height:22px;background:#0f8a17"></div>
<svg class="abs" style="left:50px;top:742.500px" width="21.500" height="21.500" viewBox="0 0 18 18"><path d="M6.200 5.500 V4.300 A2.800 2.800 0 0 1 11.800 4.300 V5.500" fill="none" stroke="#fff" stroke-width="1"/><path d="M2 6.300 L16 5 V15.200 L2 16.500 Z" fill="#fff"/><path d="M5.300 8.700 L8.500 8.400 V11 L5.300 11.200 Z M9.300 8.300 L12.700 8 V10.800 L9.300 11 Z M5.300 11.900 L8.500 11.700 V14.300 L5.300 14.500 Z M9.300 11.700 L12.700 11.500 V14.100 L9.300 14.300 Z" fill="#0f8a17"/></svg>
<!-- explorer (highlighted) -->
<div class="abs" style="left:85px;top:739px;width:40px;height:29px;background:#6e6656;border:1px solid #8a806a;border-bottom:none"></div>
<div class="abs" style="left:127.500px;top:739px;width:1.500px;height:29px;background:#7f755f"></div>
<svg class="abs" style="left:93px;top:742px" width="25" height="24" viewBox="0 0 25 24"><path d="M1 3.500 Q1 2.500 2 2.500 H9 L11 4.500 H23 Q24 4.500 24 5.500 V20 H1 Z" fill="#eccb72"/><path d="M3 5.500 H22 V19 H3 Z" fill="#fdf6dc"/><path d="M1 8 H24 V21.500 Q24 22.500 23 22.500 H2 Q1 22.500 1 21.500 Z" fill="#f8e2a0"/><circle cx="4.500" cy="2.800" r="1.200" fill="#2fb34a"/><circle cx="10.500" cy="4" r="1.200" fill="#d8392b"/><circle cx="16.500" cy="5.500" r="1.200" fill="#3b8be8"/><path d="M4 15.500 Q4 13.500 6 13.500 H19.500 Q21.500 13.500 21.500 15.500 V23 H16.800 V18.300 H8.700 V23 H4 Z" fill="#7cc0ee"/><path d="M5.500 15.500 H20 V14.800 H5.500 Z" fill="#c9e6fa"/><path d="M4 20 H8.700 V23 H4 Z M16.800 20 H21.500 V23 H16.800 Z" fill="#5aa9e2"/></svg>
<!-- help -->
<div class="abs" style="left:141.500px;top:741px;width:24.500px;height:24.500px;border-radius:50%;background:#f3f3f3"></div>
<div class="abs" style="left:143px;top:742.500px;width:21.500px;height:21.500px;border-radius:50%;background:#13608f"></div>
<div class="abs" style="left:143px;top:743px;width:21.500px;text-align:center;font-size:18px;font-weight:bold;color:#fff;line-height:21px">?</div>
<!-- edge -->
<svg class="abs" style="left:188px;top:741px" width="24.600" height="25" viewBox="0 0 24 24" preserveAspectRatio="none"><defs><linearGradient id="eg1" x1="0.500" y1="0" x2="0.300" y2="1"><stop offset="0" stop-color="#3ccbe6"/><stop offset="0.300" stop-color="#2fb6e0"/><stop offset="0.480" stop-color="#178ada"/><stop offset="1" stop-color="#0f7ad6"/></linearGradient><linearGradient id="eg2" x1="0" y1="0.200" x2="1" y2="0.700"><stop offset="0" stop-color="#3fc9c0"/><stop offset="0.600" stop-color="#5ad96a"/><stop offset="1" stop-color="#66e052"/></linearGradient><clipPath id="ecl"><circle cx="12" cy="12" r="12"/></clipPath></defs><g clip-path="url(#ecl)"><rect width="24" height="24" fill="url(#eg1)"/><path d="M15.500 1.500 C20.500 2.500 24.500 7 24.500 12 C24.500 15.200 21.500 17 18.500 16.800 C16 16.600 14 15.400 14.200 14.200 C15.600 13 16.200 11 15.800 9 C15.600 6.500 15.900 4 15.500 1.500 Z" fill="url(#eg2)"/><path d="M10 7.300 C6.800 8.800 6.300 13 8 16.800 C10 21.200 15 23.800 19.200 22.200 C21.200 21.300 22.500 20 23 18.400 C19 19.600 14 19 12 16 C10.500 14 10 11.500 10.200 10.500 Z" fill="#1560b2"/><path d="M10 10.500 H13.900 C13.500 12 13.600 13.500 14.200 14.500 C15.500 16.500 18.500 17.100 21.500 16.900 L23.800 17.600 L23 18.600 C19 19.500 14.500 18.900 12.300 16.200 C10.800 14.500 10 12.500 10 10.500 Z" fill="#554426"/><path d="M24.500 15.500 C23.500 16.500 22.500 16.900 21.500 16.900 L23.800 17.600 L23 18.400 C22.500 20 21.200 21.300 19.200 22.200 C18 22.700 17 22.900 16 22.900 L16 24.500 H24.500 Z" fill="#554426"/></g></svg>
<!-- chrome -->
<svg class="abs" style="left:235.500px;top:741.500px" width="23" height="23" viewBox="0 0 24 24"><circle cx="12" cy="12" r="11.500" fill="#e33b2e"/><path d="M12 12 L2.040 17.750 A11.500 11.500 0 0 1 2.040 6.250 Z" fill="#e33b2e"/><path d="M2.040 6.250 L7 14.900 L12 23.500 A11.500 11.500 0 0 1 2.040 6.250 Z" fill="#2da94f"/><path d="M2.040 6.250 A11.500 11.500 0 0 0 12 23.500 L17 14.900 L12 12 Z" fill="#2da94f"/><path d="M12 23.500 A11.500 11.500 0 0 0 21.960 6.250 H12 L17 14.900 Z" fill="#fbc116"/><path d="M2.040 6.250 A11.500 11.500 0 0 1 21.960 6.250 H12 Z" fill="#e33b2e"/><path d="M12 6.250 H21.960 L17 14.900 Z" fill="#fbc116"/><circle cx="12" cy="12" r="5.400" fill="#fff"/><circle cx="12" cy="12" r="4.300" fill="#4285f4"/></svg>
<!-- notepad -->
<svg class="abs" style="left:282px;top:741px" width="23" height="24" viewBox="0 0 23 24"><path d="M1 2 H15 V23 H1 Z" fill="#f4f6f1" stroke="#9aa094" stroke-width="0.800"/><path d="M1 11 H15 V23 H1 Z" fill="#6fc94a"/><path d="M1 17 H15 V23 H1 Z" fill="#3fae2f"/><path d="M2.500 1 V3.500 M4.500 1 V3.500 M6.500 1 V3.500 M8.500 1 V3.500 M10.500 1 V3.500 M12.500 1 V3.500" stroke="#777" stroke-width="0.800"/><rect x="4" y="7" width="2.200" height="9" fill="#333"/><path d="M8 9 V14 M10 8 V15 M12 10 V13" stroke="#333" stroke-width="1"/><path d="M19.500 1 L22 3 L12.500 19 L9.800 20.500 L10 17.500 Z" fill="#f09a2b"/><path d="M19.500 1 L22 3 L21 4.700 L18.500 2.700 Z" fill="#b23a5a"/><path d="M9.800 20.500 L10 17.500 L12.500 19 Z" fill="#f1d9b0"/></svg>
<!-- control panel (highlighted) -->
<div class="abs" style="left:318px;top:739px;width:44px;height:29px;background:#6e6656;border:1px solid #8a806a;border-bottom:none"></div>
<svg class="abs" style="left:327.500px;top:743.500px" width="24" height="21.500" viewBox="0 0 25 23"><rect x="0.500" y="0.500" width="24" height="17" rx="1" fill="#3a8ee0" stroke="#2a6fb8" stroke-width="0.800"/><rect x="2" y="2" width="21" height="14" fill="#55a6ee"/><circle cx="7.500" cy="8" r="4.200" fill="#e9f1fa"/><path d="M7.500 8 V3.800 A4.200 4.200 0 0 1 11.700 8 Z" fill="#f0a93a"/><rect x="14" y="4" width="7.500" height="2.600" rx="1.300" fill="#e9f1fa"/><rect x="14" y="8.500" width="7.500" height="2.600" rx="1.300" fill="#e9f1fa"/><circle cx="19.800" cy="5.300" r="1" fill="#2a6fb8"/><circle cx="15.600" cy="9.800" r="1" fill="#2a6fb8"/><ellipse cx="12" cy="19.500" rx="5.500" ry="3.300" fill="#d9dcd8"/><ellipse cx="12" cy="18.800" rx="4.500" ry="2.300" fill="#f1f2f0"/></svg>
<!-- chrome active -->
<div class="abs" style="left:364px;top:739px;width:44.500px;height:29px;background:linear-gradient(#8b8566 0%,#8f896c 70%,#a39d8e 100%);border:1px solid #c9c3b0;border-bottom:none"></div>
<svg class="abs" style="left:375px;top:742.300px" width="21.500" height="21.500" viewBox="0 0 24 24"><circle cx="12" cy="12" r="11.500" fill="#e33b2e"/><path d="M2.040 6.250 A11.500 11.500 0 0 0 12 23.500 L17 14.900 L12 12 Z" fill="#2da94f"/><path d="M12 23.500 A11.500 11.500 0 0 0 21.960 6.250 H12 L17 14.900 Z" fill="#fbc116"/><path d="M2.040 6.250 A11.500 11.500 0 0 1 21.960 6.250 H12 Z" fill="#e33b2e"/><circle cx="12" cy="12" r="5.400" fill="#fff"/><circle cx="12" cy="12" r="4.300" fill="#4285f4"/></svg>
<div class="abs" style="left:387px;top:753.500px;width:11px;height:11px;border-radius:50%;background:#c2185b;color:#fff;font-size:6.500px;font-weight:bold;text-align:center;line-height:11px">G</div>
<!-- paint -->
<svg class="abs" style="left:421px;top:741px" width="25" height="24" viewBox="0 0 25 24"><path d="M10 7 C4 7 0.800 11 0.800 15 C0.800 19.500 5 22.500 10 22.500 C13 22.500 13.500 20.500 12.500 19 C11.500 17.500 12.500 16 14.500 16 C18 16 20 14.500 20 12 C20 9 16 7 10 7 Z" fill="#dfe9f3" stroke="#8ea3bb" stroke-width="0.800"/><circle cx="5" cy="13" r="1.700" fill="#d6382c"/><circle cx="9" cy="10.500" r="1.700" fill="#3fa64b"/><circle cx="14" cy="11" r="1.700" fill="#e9b92a"/><circle cx="5.500" cy="17.500" r="1.700" fill="#3a78d8"/><path d="M22.500 0.800 L24 2 L15 18 L13 19.500 L13.500 17 Z" fill="#e08a2a"/><path d="M22.500 0.800 L24 2 L22.500 4.500 L21 3.500 Z" fill="#8a5a2a"/></svg>
<!-- tray -->
<svg class="abs" style="left:823px;top:751.500px" width="7" height="5" viewBox="0 0 7 5"><path d="M0.300 4.500 L3.500 0.800 L6.700 4.500 Z" fill="#f1efe8"/></svg>
<svg class="abs" style="left:838px;top:748px" width="13" height="12" viewBox="0 0 13 12"><path d="M1.200 0.500 V11.500" stroke="#f8f6f0" stroke-width="1.300"/><path d="M2.500 1 H7.300 V2.300 H12 L10.200 4.600 L12 6.800 H6 V5.800 H2.500 Z" fill="#f8f6f0"/></svg>
<svg class="abs" style="left:858px;top:747px" width="11" height="12" viewBox="0 0 11 12"><path d="M0.500 4 H2.500 L5.500 1 V11 L2.500 8 H0.500 Z" fill="#f1efe8"/><path d="M7.300 3.500 C8.300 5 8.300 7 7.300 8.500" fill="none" stroke="#f1efe8" stroke-width="0.900"/></svg>
<div class="abs" style="left:879px;top:748px;font-size:8.700px;color:#fff;white-space:nowrap;letter-spacing:-0.250px">ENG</div>
<div class="abs" style="left:899.500px;top:742.500px;width:56px;text-align:center;font-size:8.900px;color:#fff;white-space:nowrap;letter-spacing:-0.100px">9:49 AM</div>
<div class="abs" style="left:899.500px;top:755px;width:56px;text-align:center;font-size:8.900px;color:#fff;white-space:nowrap;letter-spacing:-0.100px">4/13/2022</div>

</div>
</body>
</html>
